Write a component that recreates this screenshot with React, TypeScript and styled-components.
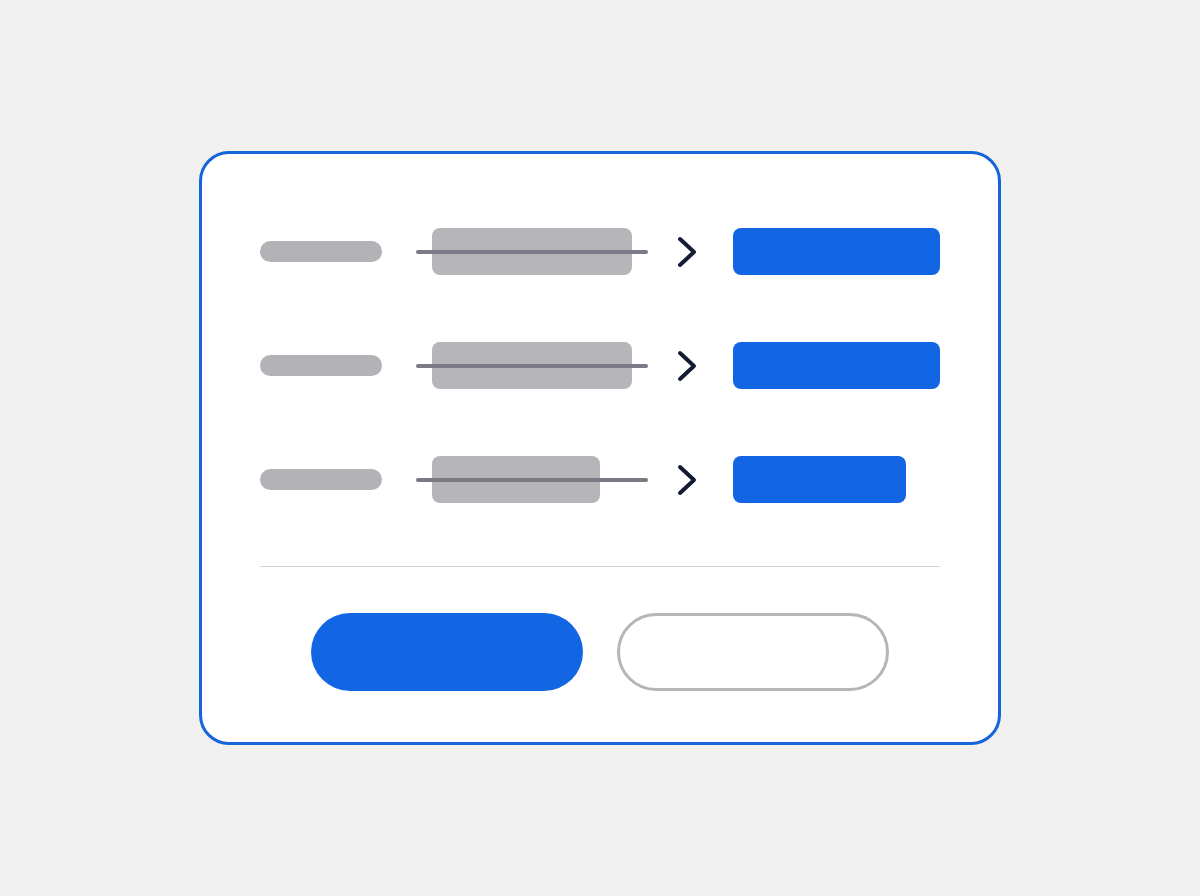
import React from "react";
import styled, { createGlobalStyle } from "styled-components";

const GlobalStyle = createGlobalStyle`
  html, body {
    margin: 0;
    padding: 0;
    background: #f0f0f1;
    font-family: "Inter", "Liberation Sans", sans-serif;
  }
`;

const Page = styled.main`
  width: 100vw;
  height: 896px;
  display: flex;
  align-items: center;
  justify-content: center;
`;

const Card = styled.section`
  box-sizing: border-box;
  width: 802px;
  height: 594px;
  background: #ffffff;
  border: 3px solid #1565d8;
  border-radius: 30px;
  padding: 74px 58px 51px 58px;
  display: flex;
  flex-direction: column;
`;

const RuleList = styled.div`
  display: flex;
  flex-direction: column;
  gap: 67px;
`;

const Row = styled.div`
  display: flex;
  align-items: center;
  height: 47px;
`;

const Label = styled.span`
  width: 122px;
  height: 21px;
  border-radius: 11px;
  background: #b2b2b7;
  flex: none;
`;

const OldValue = styled.div`
  position: relative;
  width: 232px;
  height: 47px;
  margin-left: 34px;
  flex: none;
  display: flex;
  align-items: center;
`;

const OldBox = styled.span<{ $w: number }>`
  margin-left: 16px;
  width: ${(p) => p.$w}px;
  height: 47px;
  border-radius: 8px;
  background: #b5b5ba;
`;

const Strike = styled.span`
  position: absolute;
  left: 0;
  right: 0;
  top: 22px;
  height: 4px;
  border-radius: 2px;
  background: #7b7b86;
`;

const Arrow = styled.svg`
  width: 24px;
  height: 36px;
  margin-left: 27px;
  flex: none;
`;

const NewValue = styled.span<{ $w: number }>`
  margin-left: 34px;
  width: ${(p) => p.$w}px;
  height: 47px;
  border-radius: 8px;
  background: #1366e3;
  flex: none;
`;

const Divider = styled.hr`
  margin: 63px 0 0 0;
  border: none;
  height: 2px;
  background: #d2d2d6;
`;

const Actions = styled.div`
  margin-top: 46px;
  display: flex;
  justify-content: center;
  gap: 34px;
`;

const Button = styled.button<{ $primary?: boolean }>`
  box-sizing: border-box;
  width: 272px;
  height: 78px;
  border-radius: 39px;
  padding: 0;
  cursor: pointer;
  background: ${(p) => (p.$primary ? "#1366e3" : "#ffffff")};
  border: ${(p) => (p.$primary ? "none" : "3px solid #b5b5ba")};
`;

const Chevron = () => (
  <Arrow viewBox="0 0 24 36">
    <path
      d="M5 5 L19 18 L5 31"
      fill="none"
      stroke="#141c33"
      strokeWidth="4"
      strokeLinecap="round"
      strokeLinejoin="round"
    />
  </Arrow>
);

const rules = [
  { oldW: 200, newW: 207 },
  { oldW: 200, newW: 207 },
  { oldW: 168, newW: 173 },
];

export default function App() {
  return (
    <>
      <GlobalStyle />
      <Page>
        <Card>
          <RuleList>
            {rules.map((r, i) => (
              <Row key={i}>
                <Label />
                <OldValue>
                  <OldBox $w={r.oldW} />
                  <Strike />
                </OldValue>
                <Chevron />
                <NewValue $w={r.newW} />
              </Row>
            ))}
          </RuleList>
          <Divider />
          <Actions>
            <Button $primary aria-label="Apply" />
            <Button aria-label="Cancel" />
          </Actions>
        </Card>
      </Page>
    </>
  );
}
